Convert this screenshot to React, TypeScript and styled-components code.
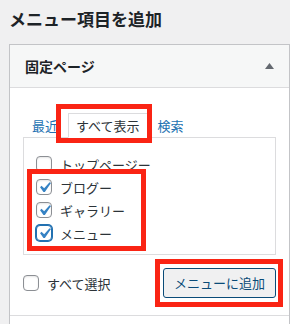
import React from "react";
import styled, { createGlobalStyle } from "styled-components";

const Global = createGlobalStyle`
  html, body { margin: 0; padding: 0; background: #f0f0f1; }
  body { font-family: "Noto Sans CJK JP", "Noto Sans", sans-serif; color: #1d2327; }
  * { box-sizing: border-box; }
`;

const Page = styled.div`
  width: 290px;
  height: 324px;
  overflow: hidden;
  padding: 8px 0 0 9px;
`;

const Title = styled.h2`
  margin: 0 0 14px;
  font-size: 17px;
  line-height: 22px;
  font-weight: 700;
  color: #1d2327;
`;

const Panel = styled.div`
  border: 1px solid #c3c4c7;
  border-bottom: none;
  background: #fff;
  width: 281px;
`;

const Header = styled.div`
  height: 43px;
  background: #f6f7f7;
  border-bottom: 1px solid #dcdcde;
  display: flex;
  align-items: center;
  justify-content: space-between;
  padding: 0 15px;
`;

const HeaderTitle = styled.span`
  font-size: 14px;
  font-weight: 600;
  color: #1d2327;
`;

const Body = styled.div`
  padding: 25px 13px 17px 13px;
  border-bottom: 1px solid #dcdcde;
`;

const TabRow = styled.ul`
  list-style: none;
  margin: 0 0 -1px;
  padding: 0 0 0 9px;
  display: flex;
  align-items: flex-end;
  gap: 10px;
  position: relative;
  z-index: 1;
`;

const Tab = styled.li<{ $active?: boolean }>`
  position: relative;
  font-size: 13px;
  line-height: 24px;
  height: ${(p) => (p.$active ? "25px" : "24px")};
  padding: ${(p) => (p.$active ? "0 7px" : "0")};
  color: ${(p) => (p.$active ? "#2c3338" : "#2271b1")};
  background: ${(p) => (p.$active ? "#fff" : "transparent")};
  border: ${(p) => (p.$active ? "1px solid #dcdcde" : "none")};
  border-bottom-color: #fff;
`;

const Annotation = styled.span<{ $t: number; $r?: number; $b: number; $l: number; $w?: number }>`
  position: absolute;
  top: ${(p) => p.$t}px;
  bottom: ${(p) => p.$b}px;
  left: ${(p) => p.$l}px;
  right: ${(p) => (p.$r !== undefined ? `${p.$r}px` : "auto")};
  width: ${(p) => (p.$w !== undefined ? `${p.$w}px` : "auto")};
  border: 5px solid #fa2414;
  pointer-events: none;
  z-index: 5;
`;

const TabPanel = styled.div`
  border: 1px solid #dcdcde;
  background: #fff;
  padding: 18px 12px 13px;
  display: flex;
  flex-direction: column;
  gap: 7px;
`;

const Group = styled.div`
  position: relative;
  display: flex;
  flex-direction: column;
  gap: 7px;
`;

const Row = styled.label`
  display: flex;
  align-items: center;
  gap: 8px;
  height: 16px;
  font-size: 13px;
  color: #2c3338;
`;

const Box = styled.span<{ $focus?: boolean }>`
  width: 16px;
  height: 16px;
  flex: none;
  border-radius: 4px;
  border: 1px solid ${(p) => (p.$focus ? "#2271b1" : "#8c8f94")};
  box-shadow: ${(p) => (p.$focus ? "0 0 0 1px #2271b1" : "inset 0 1px 2px rgba(0,0,0,0.1)")};
  background: #fff;
  position: relative;
  svg {
    position: absolute;
    left: -3px;
    top: -3px;
  }
`;

const Footer = styled.div`
  margin-top: 13px;
  display: flex;
  align-items: center;
  justify-content: space-between;
`;

const ButtonWrap = styled.div`
  position: relative;
`;

const Button = styled.button`
  height: 30px;
  padding: 0 10px;
  font-family: inherit;
  font-size: 13px;
  line-height: 28px;
  color: #0a4b78;
  background: #f0f0f1;
  border: 1px solid #0a4b78;
  border-radius: 3px;
  display: block;
`;

const NextSection = styled.div`
  height: 20px;
  background: #fff;
`;

function Check({ checked, focus }: { checked?: boolean; focus?: boolean }) {
  return (
    <Box $focus={focus}>
      {checked && (
        <svg width="21" height="21" viewBox="0 0 20 20">
          <path d="M14.83 4.89l1.34.94-5.81 8.38H9.02L5.78 9.67l1.34-1.25 2.57 2.4z" fill="#3582c4" />
        </svg>
      )}
    </Box>
  );
}

function Caret() {
  return (
    <svg width="9" height="6" viewBox="0 0 9 6">
      <polygon points="4.5,0 9,6 0,6" fill="#646970" />
    </svg>
  );
}

export default function App() {
  return (
    <>
      <Global />
      <Page>
        <Title>メニュー項目を追加</Title>
        <Panel>
          <Header>
            <HeaderTitle>固定ページ</HeaderTitle>
            <Caret />
          </Header>
          <Body>
            <TabRow>
              <Tab>最近</Tab>
              <Tab $active>
                すべて表示
                <Annotation $t={-10} $r={-5} $b={-6} $l={-13} />
              </Tab>
              <Tab>検索</Tab>
            </TabRow>
            <TabPanel>
              <Row>
                <Check />
                トップページー
              </Row>
              <Group>
                <Row>
                  <Check checked />
                  ブログー
                </Row>
                <Row>
                  <Check checked />
                  ギャラリー
                </Row>
                <Row>
                  <Check checked focus />
                  メニュー
                </Row>
                <Annotation $t={-10} $b={-10} $l={-9} $w={119} />
              </Group>
            </TabPanel>
            <Footer>
              <Row>
                <Check />
                すべて選択
              </Row>
              <ButtonWrap>
                <Button>メニューに追加</Button>
                <Annotation $t={-9} $r={-7} $b={-9} $l={-8} />
              </ButtonWrap>
            </Footer>
          </Body>
          <NextSection />
        </Panel>
      </Page>
    </>
  );
}
